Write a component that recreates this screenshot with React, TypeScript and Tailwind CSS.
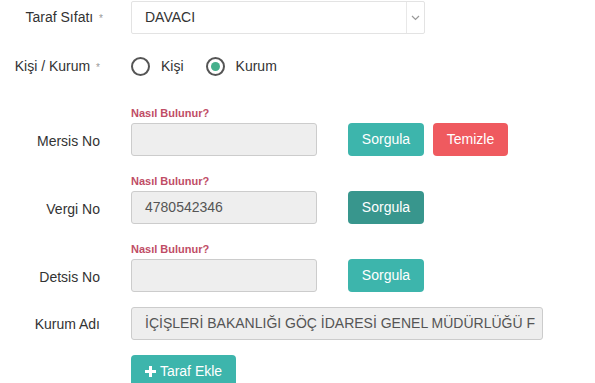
import React from 'react';

const labelCls = 'w-[100px] shrink-0 text-right text-[14px] leading-[16px] text-[#333]';
const inputCls =
  'h-[33px] rounded-[3px] border border-[#cccccc] bg-[#eeeeee] px-[13px] text-[14px] text-[#555] flex items-center';
const hint = 'text-[11px] font-bold leading-[13px] text-[#bf4d66]';

function Btn({ children, tone = 'teal', w = 'w-[76px]' }: { children: React.ReactNode; tone?: 'teal' | 'dark' | 'red'; w?: string }) {
  const bg = tone === 'teal' ? 'bg-[#3db5ac]' : tone === 'dark' ? 'bg-[#38968d]' : 'bg-[#ef5a5f]';
  return (
    <button className={`${bg} ${w} h-[33px] rounded-[4px] text-[14px] text-white flex items-center justify-center`}>
      {children}
    </button>
  );
}

function LookupRow({ label, value, clear, dark }: { label: string; value?: string; clear?: boolean; dark?: boolean }) {
  return (
    <div className="flex">
      <div className={`${labelCls} pt-[26px]`}>{label}</div>
      <div className="ml-[31px] flex flex-col">
        <div className={`${hint} mb-[3px]`}>Nasıl Bulunur?</div>
        <div className="flex items-center">
          <div className={`${inputCls} w-[186px]`}>{value}</div>
          <div className="ml-[31px] flex gap-[9px]">
            <Btn tone={dark ? 'dark' : 'teal'}>Sorgula</Btn>
            {clear && (
              <Btn tone="red" w="w-[75px]">
                Temizle
              </Btn>
            )}
          </div>
        </div>
      </div>
    </div>
  );
}

export default function App() {
  return (
    <div className="w-[595px] h-[383px] overflow-hidden bg-white" style={{ fontFamily: '"Liberation Sans", Arial, sans-serif' }}>
      {/* Taraf Sıfatı */}
      <div className="flex items-center pt-[1px]">
        <div className="w-[103px] shrink-0 text-right text-[14px] leading-[16px] text-[#333]">
          Taraf Sıfatı <span className="ml-[2px] text-[10px] text-[#999]">*</span>
        </div>
        <div className="ml-[28px] flex h-[33px] w-[294px] items-center rounded-[2px] border border-[#e3e3e3] bg-white">
          <div className="flex-1 pl-[13px] text-[14px] text-[#333]">DAVACI</div>
          <div className="flex h-full w-[18px] items-center justify-center border-l border-[#e8e8e8]">
            <svg width="9" height="6" viewBox="0 0 9 6" fill="none">
              <path d="M1 1l3.5 3.5L8 1" stroke="#999" strokeWidth="1.2" />
            </svg>
          </div>
        </div>
      </div>

      {/* Kişi / Kurum */}
      <div className="mt-[22px] flex items-center">
        <div className={labelCls}>
          Kişi / Kurum <span className="ml-[2px] text-[10px] text-[#999]">*</span>
        </div>
        <div className="ml-[31px] flex items-center">
          <span className="h-[19px] w-[19px] rounded-full border-2 border-[#555]" />
          <span className="ml-[11px] text-[14px] text-[#333]">Kişi</span>
          <span className="ml-[22px] flex h-[19px] w-[19px] items-center justify-center rounded-full border-2 border-[#555]">
            <span className="h-[9px] w-[9px] rounded-full bg-[#45b08c]" />
          </span>
          <span className="ml-[11px] text-[14px] text-[#333]">Kurum</span>
        </div>
      </div>

      <div className="mt-[30px] flex flex-col gap-[19px]">
        <LookupRow label="Mersis No" clear />
        <LookupRow label="Vergi No" value="4780542346" dark />
        <LookupRow label="Detsis No" />
      </div>

      {/* Kurum Adı */}
      <div className="mt-[15px] flex items-center">
        <div className={labelCls}>Kurum Adı</div>
        <div className={`${inputCls} ml-[31px] w-[412px] overflow-hidden whitespace-nowrap`}>
          İÇİŞLERİ BAKANLIĞI GÖÇ İDARESİ GENEL MÜDÜRLÜĞÜ F
        </div>
      </div>

      {/* Taraf Ekle */}
      <div className="mt-[15px] pl-[131px]">
        <button className="flex h-[33px] w-[105px] items-center justify-center gap-[4px] rounded-[4px] bg-[#3db5ac] text-[14px] text-white">
          <svg width="11" height="11" viewBox="0 0 11 11">
            <path d="M4 0h3v4h4v3H7v4H4V7H0V4h4z" fill="white" />
          </svg>
          Taraf Ekle
        </button>
      </div>
    </div>
  );
}
